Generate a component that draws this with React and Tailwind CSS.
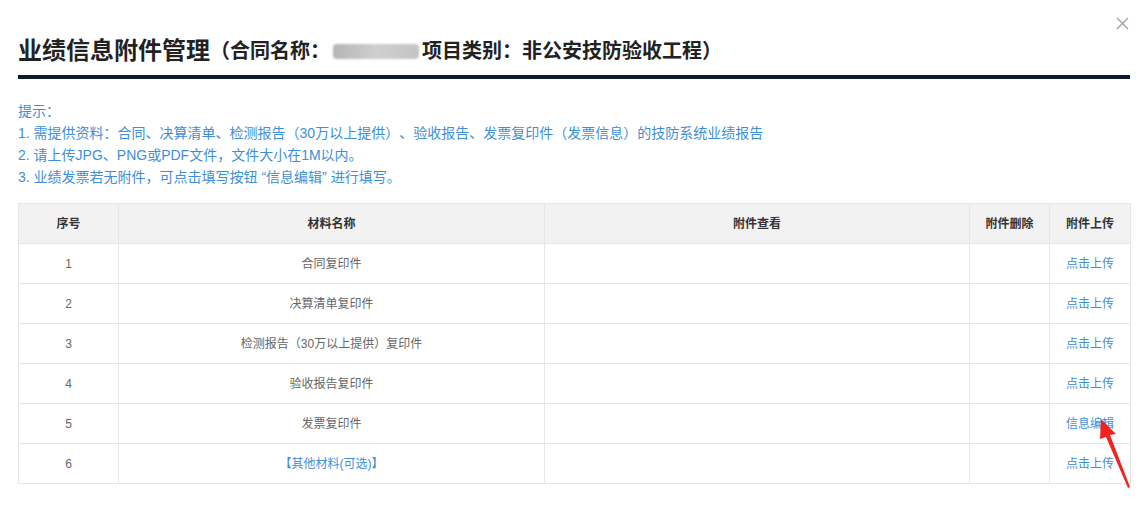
import React from 'react';

const rows = [
  { no: 1, name: '合同复印件', action: '点击上传' },
  { no: 2, name: '决算清单复印件', action: '点击上传' },
  { no: 3, name: '检测报告（30万以上提供）复印件', action: '点击上传' },
  { no: 4, name: '验收报告复印件', action: '点击上传' },
  { no: 5, name: '发票复印件', action: '信息编辑' },
  { no: 6, name: '【其他材料(可选)】', action: '点击上传', link: true },
];

export default function App() {
  return (
    <div
      lang="zh-CN"
      className="relative h-[509px] w-[1146px] bg-white px-[18px] pt-[31px] [text-spacing-trim:space-all]"
      style={{ fontFamily: '"Liberation Sans", "Noto Sans CJK SC", sans-serif' }}
    >
      {/* close */}
      <button className="absolute right-[17px] top-[17px] text-[#9a9a9a]">
        <svg width="13" height="13" viewBox="0 0 13 13" fill="none" stroke="currentColor" strokeWidth="1.2">
          <path d="M1 1 L12 12 M12 1 L1 12" />
        </svg>
      </button>

      {/* title */}
      <div className="box-content flex h-[40px] w-[1112px] items-center border-b-4 border-[#101b29] pb-[4px]">
        <h1 className="flex items-center whitespace-nowrap font-bold text-[#222]">
          <span className="text-[24px] leading-none">业绩信息附件管理</span>
          <span className="text-[20px] leading-none">（合同名称：</span>
          <span className="ml-[3px] mr-[3px] inline-block h-[15px] w-[86px] rounded-sm bg-gradient-to-r from-[#b4b4b4] via-[#cfcfcf] to-[#c4c4c4] blur-[1px]" />
          <span className="text-[20px] leading-none">项目类别：非公安技防验收工程）</span>
        </h1>
      </div>

      {/* hints */}
      <div className="mt-[21px] text-[14px] leading-[22px] text-[#3d8fd8]">
        <p>提示：</p>
        <p>1. 需提供资料：合同、决算清单、检测报告（30万以上提供）、验收报告、发票复印件（发票信息）的技防系统业绩报告</p>
        <p>2. 请上传JPG、PNG或PDF文件，文件大小在1M以内。</p>
        <p>3. 业绩发票若无附件，可点击填写按钮 “信息编辑” 进行填写。</p>
      </div>

      {/* table */}
      <table className="mt-[15px] w-[1112px] table-fixed border-collapse text-[12px]">
        <colgroup>
          <col className="w-[100px]" />
          <col className="w-[426px]" />
          <col className="w-[425px]" />
          <col className="w-[80px]" />
          <col className="w-[81px]" />
        </colgroup>
        <thead>
          <tr className="h-[40px] bg-[#f2f2f2] text-[#333]">
            <th className="border border-[#e6e6e6] font-semibold">序号</th>
            <th className="border border-[#e6e6e6] font-semibold">材料名称</th>
            <th className="border border-[#e6e6e6] font-semibold">附件查看</th>
            <th className="border border-[#e6e6e6] font-semibold">附件删除</th>
            <th className="border border-[#e6e6e6] font-semibold">附件上传</th>
          </tr>
        </thead>
        <tbody>
          {rows.map((r) => (
            <tr key={r.no} className="h-[40px] text-center text-[#666]">
              <td className="border border-[#e6e6e6]">{r.no}</td>
              <td className={`border border-[#e6e6e6] ${r.link ? 'text-[#3d8fd8]' : ''}`}>{r.name}</td>
              <td className="border border-[#e6e6e6]"></td>
              <td className="border border-[#e6e6e6]"></td>
              <td className="border border-[#e6e6e6] text-[#3d8fd8]">{r.action}</td>
            </tr>
          ))}
        </tbody>
      </table>

      {/* red arrow annotation */}
      <svg className="absolute left-[1090px] top-[412px]" width="50" height="80" viewBox="0 0 50 80">
        <path d="M11 7 L26 22 L20 23 L40 75 L38 76 L16 25 L10 27 Z" fill="#f2231d" />
      </svg>
    </div>
  );
}
